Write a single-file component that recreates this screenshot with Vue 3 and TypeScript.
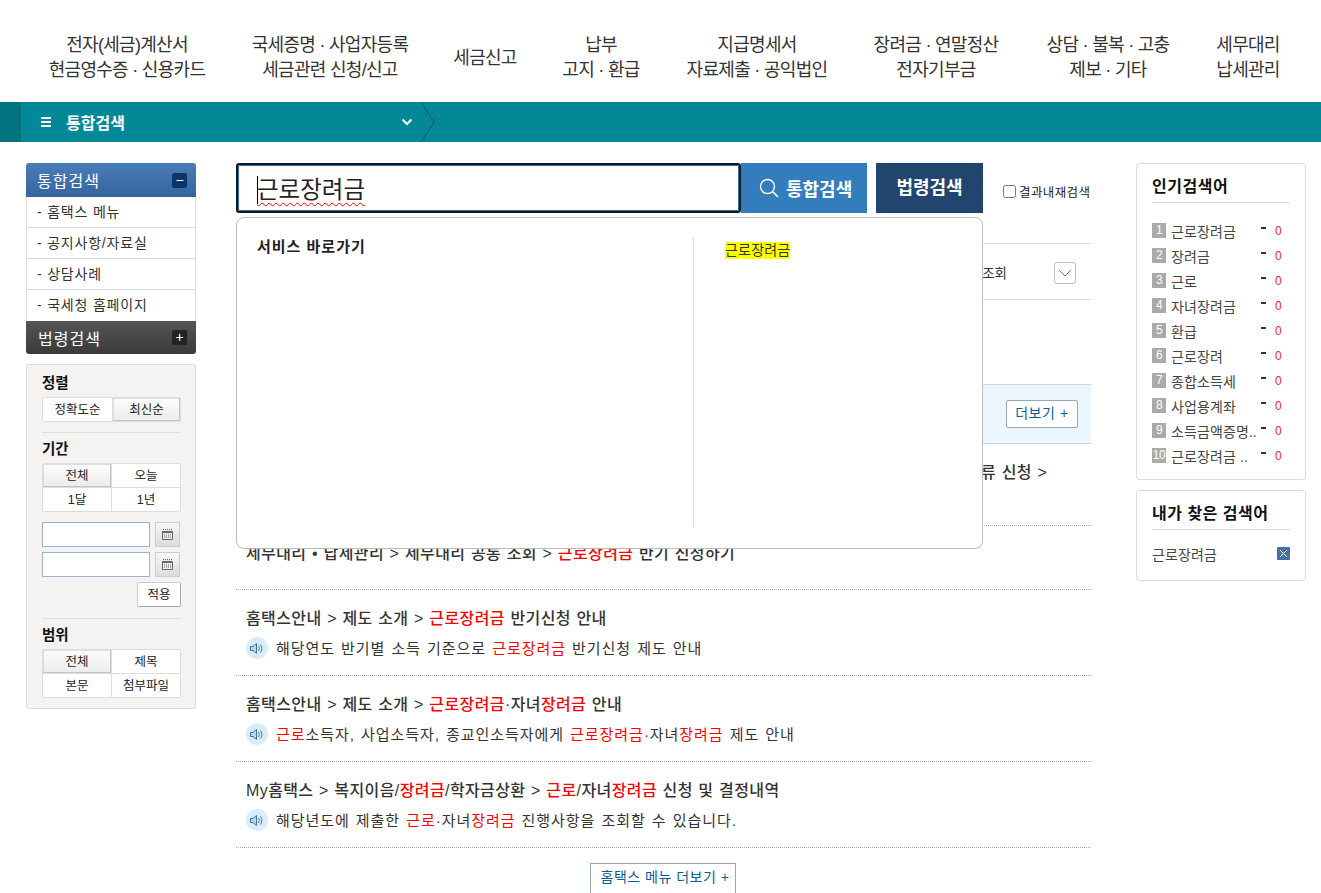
<script setup lang="ts">
type Part = { t: string; r?: boolean }
interface Result { title: Part[]; desc?: Part[] }
const K = '근로장려금'
const navItems: string[][] = [
  ['전자(세금)계산서', '현금영수증 · 신용카드'],
  ['국세증명 · 사업자등록', '세금관련 신청/신고'],
  ['세금신고'],
  ['납부', '고지 · 환급'],
  ['지급명세서', '자료제출 · 공익법인'],
  ['장려금 · 연말정산', '전자기부금'],
  ['상담 · 불복 · 고충', '제보 · 기타'],
  ['세무대리', '납세관리'],
]
const sideLinks = ['홈택스 메뉴', '공지사항/자료실', '상담사례', '국세청 홈페이지']
const popular = ['근로장려금', '장려금', '근로', '자녀장려금', '환급', '근로장려', '종합소득세', '사업용계좌', '소득금액증명..', '근로장려금 ..']
const results: Result[] = [
  {
    title: [{ t: '홈택스안내 > 제도 소개 > ' }, { t: K, r: true }, { t: ' 반기신청 안내' }],
    desc: [{ t: '해당연도 반기별 소득 기준으로 ' }, { t: K, r: true }, { t: ' 반기신청 제도 안내' }],
  },
  {
    title: [{ t: '홈택스안내 > 제도 소개 > ' }, { t: K, r: true }, { t: '·자녀' }, { t: '장려금', r: true }, { t: ' 안내' }],
    desc: [{ t: '근로', r: true }, { t: '소득자, 사업소득자, 종교인소득자에게 ' }, { t: K, r: true }, { t: '·자녀' }, { t: '장려금', r: true }, { t: ' 제도 안내' }],
  },
  {
    title: [{ t: 'My홈택스 > 복지이음/' }, { t: '장려금', r: true }, { t: '/학자금상환 > ' }, { t: '근로', r: true }, { t: '/자녀' }, { t: '장려금', r: true }, { t: ' 신청 및 결정내역' }],
    desc: [{ t: '해당년도에 제출한 ' }, { t: '근로', r: true }, { t: '·자녀' }, { t: '장려금', r: true }, { t: ' 진행사항을 조회할 수 있습니다.' }],
  },
]
</script>

<template>
  <div class="page">
    <header class="top">
      <a v-for="(item, i) in navItems" :key="i" class="top-item">
        <span v-for="line in item" :key="line">{{ line }}</span>
      </a>
    </header>

    <div class="crumb">
      <div class="crumb-strip"></div>
      <div class="crumb-sel">
        <span class="burger"><i></i><i></i><i></i></span>
        <b>통합검색</b>
        <svg class="chev" width="12" height="8" viewBox="0 0 12 8"><path d="M1.5 1.5 6 6l4.500-4.500" fill="none" stroke="#fff" stroke-width="2" /></svg>
      </div>
      <svg class="crumb-arrow" width="14" height="40" viewBox="0 0 14 40"><path d="M0 0 13 20 0 40" fill="none" stroke="#04545e" stroke-width="1" /></svg>
    </div>

    <div class="body">
      <aside class="left">
        <div class="acc acc-blue"><span>통합검색</span><em class="acc-btn navy">−</em></div>
        <ul class="side-links">
          <li v-for="s in sideLinks" :key="s">- {{ s }}</li>
        </ul>
        <div class="acc acc-dark"><span>법령검색</span><em class="acc-btn black">+</em></div>

        <div class="filter">
          <h4>정렬</h4>
          <div class="seg one">
            <span>정확도순</span><span class="on">최신순</span>
          </div>
          <hr />
          <h4>기간</h4>
          <div class="seg">
            <span class="on">전체</span><span>오늘</span><span>1달</span><span>1년</span>
          </div>
          <div class="date-row">
            <div class="date-in"></div>
            <div class="cal"><svg width="12" height="12" viewBox="0 0 12 12"><path d="M1 .5h1M3 .5h1M5 .5h1M7 .5h1M9 .5h1" stroke="#666" fill="none" /><path d="M.5 2.500h10v8h-10z" fill="#eee" stroke="#666" /><path d="M1 3h10v1H1z" fill="#666" /><path d="M2 6h8M2 8h8" stroke="#666" stroke-dasharray="1 1" /></svg></div>
          </div>
          <div class="date-row">
            <div class="date-in"></div>
            <div class="cal"><svg width="12" height="12" viewBox="0 0 12 12"><path d="M1 .5h1M3 .5h1M5 .5h1M7 .5h1M9 .5h1" stroke="#666" fill="none" /><path d="M.5 2.500h10v8h-10z" fill="#eee" stroke="#666" /><path d="M1 3h10v1H1z" fill="#666" /><path d="M2 6h8M2 8h8" stroke="#666" stroke-dasharray="1 1" /></svg></div>
          </div>
          <div class="apply-row"><span class="apply">적용</span></div>
          <hr class="hr2" />
          <h4>범위</h4>
          <div class="seg">
            <span class="on">전체</span><span>제목</span><span>본문</span><span>첨부파일</span>
          </div>
        </div>
      </aside>

      <main class="main">
        <div class="search-row">
          <div class="search-box"><i class="caret"></i><span class="typed">근로장려금</span></div>
          <div class="btn-total">
            <svg width="20" height="20" viewBox="0 0 20 20"><circle cx="8.500" cy="8.500" r="7" fill="none" stroke="#fff" stroke-width="1.400" /><path d="M13.500 13.500 19 19" stroke="#fff" stroke-width="1.600" /></svg>
            통합검색
          </div>
          <div class="btn-law">법령검색</div>
          <label class="recheck"><span class="box"></span>결과내재검색</label>
        </div>

        <div class="dropdown">
          <div class="dd-left">서비스 바로가기</div>
          <div class="dd-right"><mark>근로장려금</mark></div>
        </div>

        <div class="sort-row">
          <span>조회</span>
          <span class="sort-toggle"><svg width="14" height="8" viewBox="0 0 14 8"><path d="M1 1l6 6 6-6" fill="none" stroke="#777" /></svg></span>
        </div>

        <div class="section-head"><span class="more-sm">더보기 +</span></div>

        <div class="res res-first"><p class="res-title ta-r">류 신청 &gt;</p></div>
        <div class="res res-second"><p class="res-title">세무대리 • 납세관리 &gt; 세무대리 공통 조회 &gt; <span class="red">근로장려금</span> 반기 신청하기</p></div>

        <div v-for="(r, i) in results" :key="i" class="res">
          <p class="res-title"><template v-for="(p, j) in r.title" :key="j"><span :class="{ red: p.r }">{{ p.t }}</span></template></p>
          <p class="res-desc">
            <span class="spk"><svg width="14" height="13" viewBox="0 0 14 13"><path d="M.5 4.500h2.500L6.500 1.500v10L3 8.500H.5z" fill="#bcd6ea" stroke="#3f7299" /><path d="M8.500 4c1 1.500 1 3.500 0 5M10.500 2.500c1.800 2.500 1.800 5.500 0 8" fill="none" stroke="#3f7299" /></svg></span>
            <span class="desc-text"><template v-for="(p, j) in r.desc" :key="j"><span :class="{ red: p.r }">{{ p.t }}</span></template></span>
          </p>
        </div>

        <div class="more-row"><span class="more-lg">홈택스 메뉴 더보기 +</span></div>
      </main>

      <aside class="right">
        <section class="card card-pop">
          <h3>인기검색어</h3>
          <ol>
            <li v-for="(w, i) in popular" :key="i">
              <b class="num">{{ i + 1 }}</b>
              <span class="word">{{ w }}</span>
              <i class="dash"></i>
              <span class="zero">0</span>
            </li>
          </ol>
        </section>
        <section class="card card-mine">
          <h3>내가 찾은 검색어</h3>
          <div class="mine">
            <span>근로장려금</span>
            <svg width="13" height="13" viewBox="0 0 13 13"><rect width="13" height="13" rx="1" fill="#4472a8" /><path d="M3 3l7 7M10 3l-7 7" stroke="#fff" /></svg>
          </div>
        </section>
      </aside>
    </div>
  </div>
</template>

<style>
html, body { margin: 0; background: #fff; overflow: hidden; }
</style>

<style scoped>
.page { height: 893px; overflow: hidden; font-family: "Liberation Sans", "Noto Sans CJK KR", sans-serif; color: #333; }
.top { height: 102px; display: grid; grid-template-columns: 202px 204px 106px 126px 186px 172px 172px 108px; padding-left: 26px; align-items: center; box-sizing: border-box; padding-top: 14px; }
.top-item { display: flex; flex-direction: column; align-items: center; font-size: 18px; line-height: 25px; letter-spacing: -.7px; color: #333; white-space: nowrap; }
.crumb { height: 40px; background: #028897; display: flex; position: relative; }
.crumb-strip { width: 21px; background: #02727e; }
.crumb-sel { width: 400px; display: flex; align-items: center; color: #fff; padding-left: 20px; box-sizing: border-box; }
.crumb-sel b { font-size: 16px; font-weight: 700; margin-left: 15px; }
.burger { display: flex; flex-direction: column; gap: 2px; width: 10px; }
.burger i { height: 2px; background: #fff; display: block; }
.chev { margin-left: auto; margin-right: 8px; }
.crumb-arrow { position: absolute; left: 421px; top: 0; }

.body { display: flex; padding: 21px 0 0 26px; align-items: flex-start; }
.left { width: 170px; flex: none; }
.acc { height: 34px; display: flex; align-items: center; justify-content: space-between; color: #fff; font-size: 16px; letter-spacing: 1px; padding: 0 9px 0 11px; box-sizing: border-box; border-radius: 3px 3px 0 0; }
.acc-blue { background: linear-gradient(#4a7cb9, #34659f); }
.acc-dark { background: linear-gradient(#555, #3a3a3a); height: 33px; border-radius: 0 0 3px 3px; padding-left: 12px; }
.acc-btn { width: 15px; height: 15px; border-radius: 2px; font-style: normal; font-size: 14px; line-height: 14px; letter-spacing: 0; text-align: center; color: #fff; }
.navy { background: #0c3566; }
.black { background: #222; }
.side-links { list-style: none; margin: 0; padding: 0; border-left: 1px solid #ddd; border-right: 1px solid #ddd; }
.side-links li { height: 31px; box-sizing: border-box; border-bottom: 1px solid #ddd; font-size: 14px; letter-spacing: .8px; line-height: 31px; padding-left: 10px; color: #333; }
.side-links li:last-child { border-bottom: 0; }
.filter { margin-top: 10px; background: #f4f3f2; border: 1px solid #ddd; border-radius: 3px; height: 345px; box-sizing: border-box; padding: 8px 15px 0 15px; }
.filter h4 { margin: 0 0 -1px; padding-top: 1px; font-size: 14.500px; line-height: 18px; font-weight: 700; color: #111; }
.filter hr { border: 0; border-top: 1px solid #ddd; margin: 10px -1px 6px 0; }
.filter .hr2 { margin-top: 11px; }
.seg { margin-top: 6px; width: 139px; display: grid; grid-template-columns: 69px 68px; grid-auto-rows: 23.500px; background: #fff; border: 1px solid #ddd; box-sizing: border-box; border-radius: 2px; }
.seg span { font-size: 12.500px; line-height: 25px; text-align: center; color: #222; border-right: 1px solid #ddd; border-bottom: 1px solid #ddd; box-sizing: border-box; white-space: nowrap; overflow: hidden; }
.seg span:nth-child(2n) { border-right: 0; }
.seg span:nth-last-child(-n+2) { border-bottom: 0; }
.seg.one { grid-template-columns: 70px 67px; grid-auto-rows: 23px; height: 25px; }
.seg .on { background: linear-gradient(#fcfcfc, #ececec); box-shadow: inset -1px -1px 0 #c4c4c4, inset 1px 1px 0 #ddd; }
.date-row { display: flex; gap: 5px; margin-top: 5px; }
.seg + .date-row { margin-top: 10px; }
.date-in { width: 109px; height: 25px; box-sizing: border-box; background: #fff; border: 1px solid #9bb2cc; }
.cal { width: 25px; height: 25px; box-sizing: border-box; border: 1px solid #ccc; background: linear-gradient(#f7f7f7, #dcdcdc); display: flex; align-items: center; justify-content: center; }
.apply-row { display: flex; justify-content: flex-end; margin-top: 5px; width: 139px; }
.apply { width: 44px; height: 25px; box-sizing: border-box; border: 1px solid #ccc; border-bottom-color: #aaa; border-right-color: #aaa; background: #fff; font-size: 12.500px; line-height: 25px; text-align: center; border-radius: 2px; color: #222; overflow: hidden; }

.main { width: 855px; margin-left: 40px; position: relative; flex: none; }
.search-row { display: flex; height: 50px; align-items: stretch; }
.search-box { width: 505px; box-sizing: border-box; border: 2px solid #101820; box-shadow: inset 0 0 0 1px #2b6cb4; border-radius: 3px; display: flex; align-items: center; padding-left: 19px; position: relative; }
.typed { font-size: 23.500px; color: #222; text-decoration: underline wavy #f00 1px; text-underline-offset: 4px; text-decoration-skip-ink: none; }
.caret { position: absolute; left: 19px; top: 11px; width: 1px; height: 28px; background: #000; }
.btn-total { width: 126px; box-sizing: border-box; padding-left: 18px; background: #337dbd; color: #fff; display: flex; align-items: center; gap: 7px; font-size: 18px; font-weight: 700; }
.btn-law { width: 107px; margin-left: 9px; background: #21456f; color: #fff; font-size: 18px; font-weight: 700; text-align: center; line-height: 50px; }
.recheck { margin-left: 20px; display: flex; align-items: center; font-size: 12.500px; color: #222; gap: 3px; letter-spacing: .4px; padding-top: 6px; white-space: nowrap; }
.box { width: 13px; height: 13px; box-sizing: border-box; border: 1px solid #777; border-radius: 2.500px; background: #fff; }

.dropdown { position: absolute; left: 0; top: 54px; width: 747px; height: 332px; box-sizing: border-box; background: #fff; border: 1px solid #bbb; border-radius: 8px; display: flex; z-index: 5; padding-top: 20px; }
.dd-left { width: 457px; height: 289px; box-sizing: border-box; border-right: 1px solid #ddd; padding-left: 20px; font-size: 15px; letter-spacing: 1px; font-weight: 700; color: #222; line-height: 17px; }
.dd-right { padding-left: 31px; font-size: 14px; letter-spacing: .2px; line-height: 17px; padding-top: 4px; }
.dd-right mark { background: #ff0; color: #333; display: inline-block; }

.sort-row { margin-top: 30px; height: 57px; box-sizing: border-box; border-top: 1px solid #ddd; border-bottom: 1px solid #ddd; display: flex; justify-content: flex-end; align-items: center; font-size: 13.500px; color: #333; padding-right: 15px; }
.sort-toggle { width: 22px; height: 22px; box-sizing: border-box; margin-left: 47px; margin-top: 3px; border: 1px solid #bbb; border-radius: 3px; display: flex; align-items: center; justify-content: center; }
.section-head { margin-top: 84px; height: 60px; box-sizing: border-box; background: #ebf6fe; border-top: 1px solid #c5d6e2; border-bottom: 1px solid #c5d6e2; display: flex; justify-content: flex-end; align-items: center; padding-right: 13px; }
.more-sm { width: 72px; height: 28px; box-sizing: border-box; border: 1px solid #8faabf; border-radius: 2px; background: #fff; color: #0d5c94; font-size: 14px; letter-spacing: .6px; line-height: 25px; text-align: center; white-space: nowrap; }
.res { border-bottom: 1px dotted #aaa; box-sizing: border-box; height: 86px; padding: 18px 10px 0; }
.res-first { height: 82px; padding-top: 18px; }
.res-second { height: 64px; padding-top: 17px; }
.res p { margin: 0; }
.res-title { font-size: 16px; letter-spacing: .4px; word-spacing: .7px; line-height: 22px; font-weight: 500; color: #333; white-space: nowrap; }
.ta-r { padding-left: 735px; }
.red { color: #f00; }
.res-desc { display: flex; align-items: center; margin-top: 7px !important; height: 22px; font-size: 15px; letter-spacing: .95px; word-spacing: 1px; color: #333; white-space: nowrap; }
.desc-text { padding-bottom: 2px; }
.spk { width: 22px; height: 22px; border-radius: 50%; background: #d8ecfb; display: flex; align-items: center; justify-content: center; margin-right: 8px; flex: none; }
.more-row { display: flex; justify-content: center; padding: 15px 0 0 0; margin-left: -1px; }
.more-lg { width: 146px; height: 40px; box-sizing: border-box; border: 1px solid #8faabf; background: #fff; color: #0d5c94; font-size: 14px; letter-spacing: .5px; line-height: 27px; padding-left: 4px; text-align: center; white-space: nowrap; }

.right { width: 170px; margin-left: 45px; flex: none; }
.card { border: 1px solid #ddd; border-radius: 3px; box-sizing: border-box; padding: 0 15px; }
.card h3 { margin: 0; font-size: 16px; letter-spacing: .5px; font-weight: 700; color: #111; height: 39px; box-sizing: border-box; line-height: 21px; padding-top: 12px; border-bottom: 1px solid #ddd; white-space: nowrap; }
.card-pop { height: 317px; }
.card-mine { margin-top: 10px; height: 91px; }
.card ol { list-style: none; margin: 0; padding: 15px 0 0; }
.card li { height: 25px; display: flex; align-items: center; font-size: 14px; letter-spacing: .1px; color: #444; }
.num { width: 14px; height: 15px; background: #aaa; color: #fff; font-size: 12px; font-weight: 400; line-height: 15px; text-align: center; flex: none; letter-spacing: -.5px; }
.word { margin-left: 5px; width: 85px; flex: none; white-space: nowrap; overflow: hidden; }
.dash { width: 5px; height: 2px; background: #333; margin: -5px 0 0 5px; flex: none; }
.zero { color: #f0254f; margin-left: 9px; font-size: 12px; }
.mine { display: flex; justify-content: space-between; align-items: center; height: 47px; font-size: 14px; letter-spacing: .1px; color: #444; }
</style>
